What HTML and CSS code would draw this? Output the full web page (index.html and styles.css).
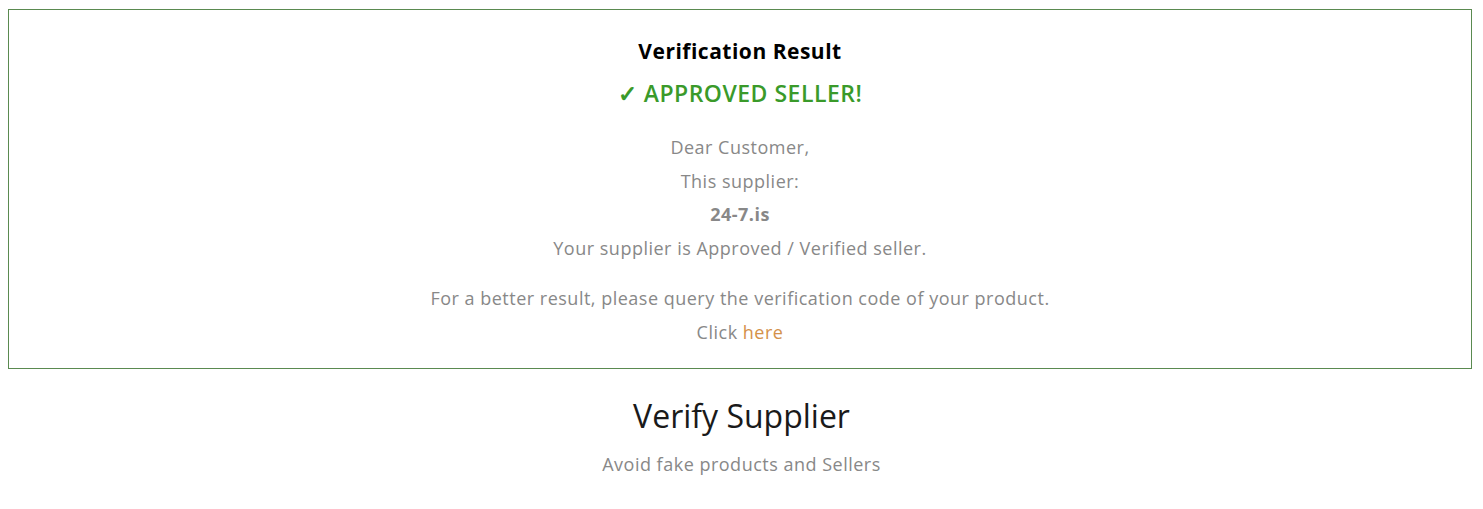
FILE: index.html
```html
<!DOCTYPE html>
<html lang="en">
  <head>
    <meta charset="UTF-8">
    <meta name="viewport" content="width=device-width, initial-scale=1.0">
    <title>Verify Supplier</title>
    <link rel="stylesheet" href="styles.css">
  </head>
  <body>
    <section class="result">
      <h3 class="result-title">Verification Result</h3>
      <div class="status">&#10003; APPROVED SELLER!</div>
      <div class="message">
        <p>Dear Customer,</p>
        <p>This supplier:</p>
        <p><strong>24-7.is</strong></p>
        <p>Your supplier is Approved / Verified seller.</p>
      </div>
      <div class="message hint">
        <p>For a better result, please query the verification code of your product.</p>
        <p>Click <a href="#">here</a></p>
      </div>
    </section>

    <section class="verify">
      <h2>Verify Supplier</h2>
      <p class="subtitle">Avoid fake products and Sellers</p>
    </section>
  </body>
</html>
```

FILE: styles.css
```css
body, html {
  margin: 0;
  padding: 0;
  background-color: #fff;
  font-family: 'Open Sans', 'Noto Sans', sans-serif;
  color: #888;
}

.result {
  margin: 9px 11px 0 8px;
  border: 1px solid #5a8a50;
  padding: 27px 20px 19px;
  text-align: center;
}

.result-title {
  margin: 0;
  font-size: 21px;
  font-weight: 700;
  letter-spacing: 0.5px;
  color: #000;
  line-height: 28px;
}

.status {
  margin-top: 13px;
  font-size: 23px;
  font-weight: 600;
  letter-spacing: 0.5px;
  color: #3a9a2a;
  line-height: 30px;
}

.message {
  margin-top: 23px;
  font-size: 18px;
  letter-spacing: 0.5px;
}

.message p {
  margin: 0;
  line-height: 33.5px;
}

.message strong {
  color: #888;
  font-weight: 700;
}

.hint {
  margin-top: 17px;
}

.hint a {
  color: #d4914a;
  text-decoration: none;
}

.verify {
  text-align: center;
  padding-top: 26px;
}

.verify h2 {
  margin: 0;
  font-size: 32px;
  font-weight: 500;
  color: #1a1a1a;
  line-height: 42px;
}

.subtitle {
  margin: 14px 0 0;
  font-size: 18px;
  letter-spacing: 0.5px;
  line-height: 26px;
}
```
